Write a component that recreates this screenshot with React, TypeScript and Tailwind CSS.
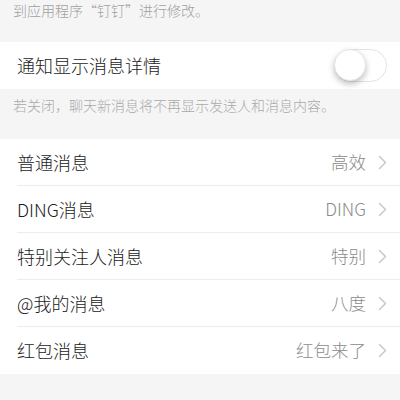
const font = { fontFamily: '"Noto Sans CJK SC", "Noto Sans", sans-serif' };

const rows = [
  { label: "普通消息", value: "高效" },
  { label: "DING消息", value: "DING" },
  { label: "特别关注人消息", value: "特别" },
  { label: "@我的消息", value: "八度" },
  { label: "红包消息", value: "红包来了" },
];

function Chevron() {
  return (
    <svg width="9" height="15" viewBox="0 0 9 15" fill="none" aria-hidden="true">
      <path d="M1.5 1.5l6 6-6 6" stroke="#c8c8cc" strokeWidth="1.5" strokeLinecap="round" strokeLinejoin="round" />
    </svg>
  );
}

function Toggle() {
  return (
    <div className="relative w-[53px] h-[33px] rounded-full border-[1.5px] border-[#e3e3e3] bg-white">
      <div className="absolute left-[-1px] top-[-1px] w-[32px] h-[32px] rounded-full bg-white shadow-[0_3px_6px_rgba(0,0,0,0.25)] border border-[#e6e6e6]" />
    </div>
  );
}

export default function App() {
  return (
    <div className="min-h-screen w-full bg-[#f5f5f6] font-light" style={font}>
      <div className="h-[42px] px-[13px] text-[14px] leading-[20px] text-[#a0a0a0]">
        到应用程序“钉钉”进行修改。
      </div>

      <div className="h-[47px] bg-white flex items-center justify-between pl-[17px] pr-[13px]">
        <span className="text-[18px] text-[#1a1a1a]">通知显示消息详情</span>
        <Toggle />
      </div>

      <div className="h-[50px] px-[13px] pt-[6px] text-[14px] leading-[20px] text-[#aaaaaa]">
        若关闭，聊天新消息将不再显示发送人和消息内容。
      </div>

      <div className="bg-white pl-[17px]">
        {rows.map((r, i) => (
          <div
            key={r.label}
            className={`h-[47px] flex items-center justify-between pr-[13px] ${
              i < rows.length - 1 ? "border-b border-[#ececec]" : ""
            }`}
          >
            <span className="text-[18px] text-[#1a1a1a]">{r.label}</span>
            <div className="flex items-center gap-[12px]">
              <span className="text-[17.5px] text-[#8a8a8a]">{r.value}</span>
              <Chevron />
            </div>
          </div>
        ))}
      </div>
    </div>
  );
}
